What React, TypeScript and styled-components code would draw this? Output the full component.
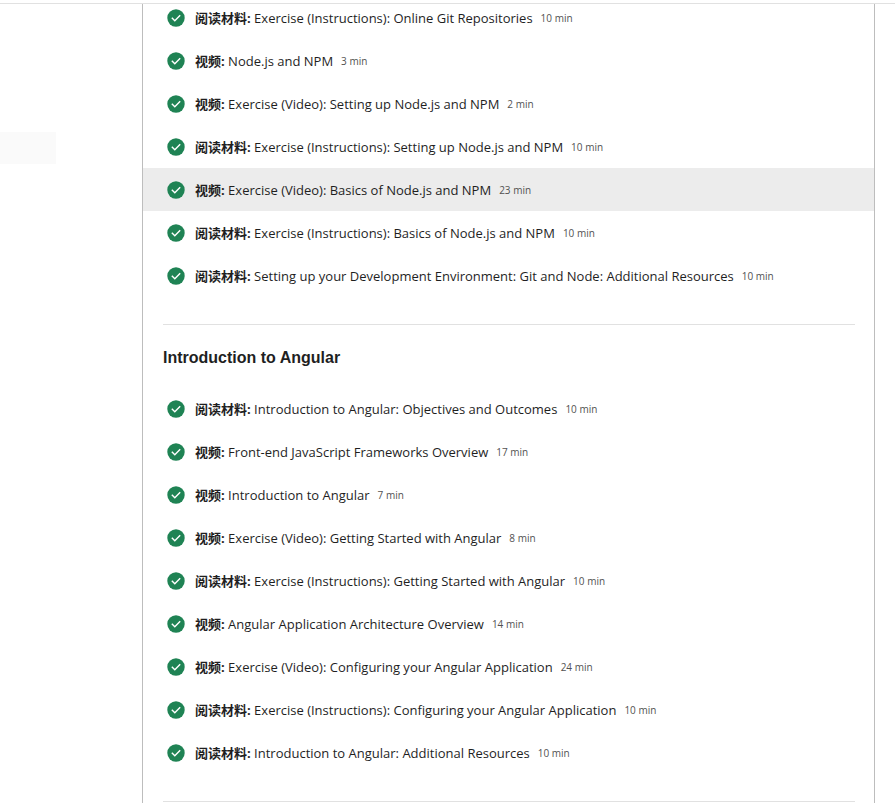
import React from "react";
import styled, { createGlobalStyle } from "styled-components";

const GlobalStyle = createGlobalStyle`
  * { box-sizing: border-box; }
  html, body { margin: 0; background: #fff; }
  body { height: 803px; overflow: hidden; }
`;

const Page = styled.div`
  height: 803px;
  padding-top: 3px;
  overflow: hidden;
  font-family: "Open Sans", "Noto Sans CJK SC", sans-serif;
  color: #1f1f1f;
`;
const Frame = styled.div`
  display: flex;
  height: 800px;
  border-top: 1px solid #e1e1e1;
`;
const Sidebar = styled.aside`
  width: 142px;
  padding-top: 128px;
`;
const ActiveTab = styled.div`
  width: 56px;
  height: 32px;
  background: #fafafa;
`;
const Panel = styled.main`
  width: 733px;
  height: 800px;
  overflow: hidden;
  border: solid #bdbdbd;
  border-width: 0 1px;
`;
const List = styled.ul<{ $offset?: boolean }>`
  list-style: none;
  margin: ${(p) => (p.$offset ? "-8px" : "0")} 0 0;
  padding: 0;
`;
const Row = styled.li<{ $active?: boolean }>`
  display: flex;
  align-items: center;
  height: 43px;
  padding-left: 24px;
  white-space: nowrap;
  background: ${(p) => (p.$active ? "#ececec" : "transparent")};
`;
const Check = styled.svg`
  width: 18px;
  height: 18px;
  margin-right: 10px;
  flex: none;
`;
const Title = styled.span`
  font-size: 13px;
  line-height: 20px;
`;
const Kind = styled.strong`
  font-weight: 700;
`;
const Duration = styled.span`
  margin-left: 8px;
  font-size: 10px;
  line-height: 20px;
  color: #525252;
`;
const Divider = styled.hr`
  height: 1px;
  margin: 27px 19px 0 20px;
  border: 0;
  background: #e1e1e1;
`;
const Heading = styled.h2`
  margin: 21px 0 17px 20px;
  font: 700 16px/24px "Liberation Sans", Arial, sans-serif;
`;

type Item = { kind: string; title: string; min: number; active?: boolean };
const READ = "阅读材料:";
const VIDEO = "视频:";

const setup: Item[] = [
  { kind: READ, title: "Exercise (Instructions): Online Git Repositories", min: 10 },
  { kind: VIDEO, title: "Node.js and NPM", min: 3 },
  { kind: VIDEO, title: "Exercise (Video): Setting up Node.js and NPM", min: 2 },
  { kind: READ, title: "Exercise (Instructions): Setting up Node.js and NPM", min: 10 },
  { kind: VIDEO, title: "Exercise (Video): Basics of Node.js and NPM", min: 23, active: true },
  { kind: READ, title: "Exercise (Instructions): Basics of Node.js and NPM", min: 10 },
  { kind: READ, title: "Setting up your Development Environment: Git and Node: Additional Resources", min: 10 },
];
const angular: Item[] = [
  { kind: READ, title: "Introduction to Angular: Objectives and Outcomes", min: 10 },
  { kind: VIDEO, title: "Front-end JavaScript Frameworks Overview", min: 17 },
  { kind: VIDEO, title: "Introduction to Angular", min: 7 },
  { kind: VIDEO, title: "Exercise (Video): Getting Started with Angular", min: 8 },
  { kind: READ, title: "Exercise (Instructions): Getting Started with Angular", min: 10 },
  { kind: VIDEO, title: "Angular Application Architecture Overview", min: 14 },
  { kind: VIDEO, title: "Exercise (Video): Configuring your Angular Application", min: 24 },
  { kind: READ, title: "Exercise (Instructions): Configuring your Angular Application", min: 10 },
  { kind: READ, title: "Introduction to Angular: Additional Resources", min: 10 },
];

function Lesson({ item }: { item: Item }) {
  return (
    <Row $active={item.active}>
      <Check viewBox="0 0 18 18" aria-hidden="true">
        <circle cx="9" cy="9" r="8.7" fill="#1f8354" />
        <path d="M4.8 8.8l3 3 5.4-5.6" fill="none" stroke="#fff" strokeWidth="1.4" />
      </Check>
      <Title>
        <Kind>{item.kind}</Kind> {item.title}
      </Title>
      <Duration>{item.min} min</Duration>
    </Row>
  );
}

export default function App() {
  return (
    <Page>
      <GlobalStyle />
      <Frame>
        <Sidebar>
          <ActiveTab />
        </Sidebar>
        <Panel>
          <List $offset>
            {setup.map((i) => <Lesson key={i.title} item={i} />)}
          </List>
          <Divider />
          <Heading>Introduction to Angular</Heading>
          <List>
            {angular.map((i) => <Lesson key={i.title} item={i} />)}
          </List>
          <Divider />
        </Panel>
      </Frame>
    </Page>
  );
}
